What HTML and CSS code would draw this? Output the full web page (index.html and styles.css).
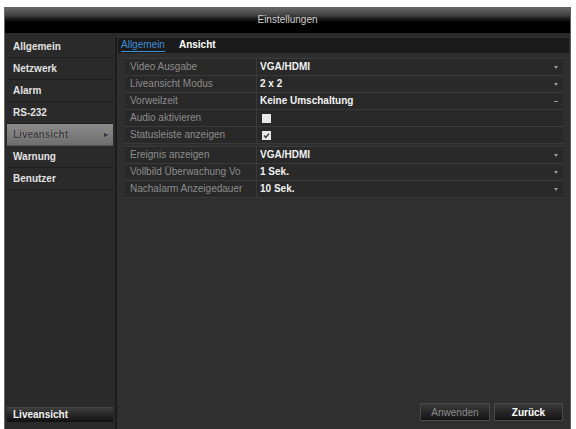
FILE: index.html
```html
<!DOCTYPE html>
<html lang="de">
<head>
<meta charset="utf-8">
<title>Einstellungen</title>
<link rel="stylesheet" href="styles.css">
</head>
<body>
<div class="frame">
  <div class="titlebar">Einstellungen</div>
  <div class="main">
    <nav class="sidebar">
      <div class="menu">
        <div class="item">Allgemein</div>
        <div class="item">Netzwerk</div>
        <div class="item">Alarm</div>
        <div class="item">RS-232</div>
        <div class="item selected">Liveansicht<span class="caret">&#9656;</span></div>
        <div class="item">Warnung</div>
        <div class="item">Benutzer</div>
      </div>
      <div class="sidefoot">Liveansicht</div>
    </nav>
    <section class="content">
      <div class="tabs">
        <span class="tab active">Allgemein</span>
        <span class="tab">Ansicht</span>
      </div>
      <div class="group">
        <div class="row"><div class="label">Video Ausgabe</div><div class="value">VGA/HDMI<span class="arrow"></span></div></div>
        <div class="row"><div class="label">Liveansicht Modus</div><div class="value">2 x 2<span class="arrow"></span></div></div>
        <div class="row"><div class="label">Vorweilzeit</div><div class="value">Keine Umschaltung<span class="arrow dash"></span></div></div>
        <div class="row"><div class="label">Audio aktivieren</div><div class="value"><span class="check"></span></div></div>
        <div class="row"><div class="label">Statusleiste anzeigen</div><div class="value"><span class="check on"><svg viewBox="0 0 9 9" width="9" height="9"><path d="M2 4.6 L3.8 6.4 L7 2.6" fill="none" stroke="#333" stroke-width="1.4"/></svg></span></div></div>
      </div>
      <div class="group">
        <div class="row"><div class="label">Ereignis anzeigen</div><div class="value">VGA/HDMI<span class="arrow"></span></div></div>
        <div class="row"><div class="label">Vollbild Überwachung Vo</div><div class="value">1 Sek.<span class="arrow"></span></div></div>
        <div class="row"><div class="label">Nachalarm Anzeigedauer</div><div class="value">10 Sek.<span class="arrow"></span></div></div>
      </div>
      <div class="buttons">
        <button class="btn disabled">Anwenden</button>
        <button class="btn">Zurück</button>
      </div>
    </section>
  </div>
</div>
</body>
</html>
```

FILE: styles.css
```css
html, body {
  margin: 0;
  padding: 0;
  background: #ffffff;
  overflow: hidden;
  height: 429px;
}
body {
  padding: 7px 5px 0 4px;
  box-sizing: border-box;
  font-family: "Liberation Sans", Arial, sans-serif;
  font-size: 10px;
}
.frame {
  height: 422px;
  background: #2a2a2a;
  border-left: 1px solid #6a6a6a;
  border-right: 1px solid #5a5a5a;
  display: flex;
  flex-direction: column;
}
.titlebar {
  height: 26px;
  line-height: 26px;
  text-align: center;
  color: #cfcfcf;
  font-size: 10px;
  background: linear-gradient(#6a6a6a 0, #444 30%, #111 50%, #000 60%, #000 100%);
}
.main {
  flex: 1;
  display: flex;
  padding-top: 3px;
  background: #2a2a2a;
}
.sidebar {
  width: 106px;
  padding: 0 2px;
  border-right: 2px solid #1c1c1c;
  display: flex;
  flex-direction: column;
  background: #2a2a2a;
}
.menu {
  display: flex;
  flex-direction: column;
}
.item {
  height: 21px;
  line-height: 21px;
  padding-left: 6px;
  border-bottom: 1px solid #1f1f1f;
  color: #e2e2e2;
  font-weight: bold;
  position: relative;
}
.item.selected {
  background: linear-gradient(#8c8c8c, #6e6e6e);
  color: #3a3a3a;
  text-shadow: 0 0 1px #bbb;
  border-bottom-color: #555;
}
.caret {
  position: absolute;
  right: 5px;
  top: 0;
  font-size: 8px;
  color: #333;
}
.sidefoot {
  margin-top: auto;
  margin-bottom: 7px;
  height: 14px;
  line-height: 14px;
  padding-left: 6px;
  color: #f0f0f0;
  font-weight: bold;
  background: linear-gradient(#3c3c3c, #101010);
  border-top: 1px solid #444;
}
.content {
  flex: 1;
  display: flex;
  flex-direction: column;
  background: #2f2f2f;
  padding: 2px 0 8px 1px;
}
.tabs {
  height: 15px;
  line-height: 14px;
  background: #1b1b1b;
  margin-right: 1px;
  padding-left: 3px;
  display: flex;
  gap: 14px;
}
.tab {
  color: #ffffff;
  font-weight: bold;
}
.tab.active {
  color: #3d8fd6;
  font-weight: normal;
  border-bottom: 1px solid #3d8fd6;
  height: 13px;
}
.group {
  margin: 5px 7px 0 7px;
  display: grid;
  grid-auto-rows: 16px;
  row-gap: 1px;
  padding: 1px 0;
  background: #3a3a3a;
}
.group + .group {
  margin-top: 2px;
}
.row {
  display: flex;
  background: #292929;
}
.label {
  width: 126px;
  padding-left: 5px;
  border-right: 1px solid #3a3a3a;
  color: #8c8c8c;
  line-height: 16px;
  white-space: nowrap;
  overflow: hidden;
}
.value {
  flex: 1;
  padding-left: 3px;
  color: #f2f2f2;
  font-weight: bold;
  line-height: 16px;
  display: flex;
  align-items: center;
  position: relative;
}
.arrow {
  position: absolute;
  right: 5px;
  top: 7px;
  width: 0;
  height: 0;
  border-left: 2px solid transparent;
  border-right: 2px solid transparent;
  border-top: 3px solid #9a9a9a;
}
.arrow.dash {
  border: none;
  width: 4px;
  height: 1px;
  background: #9a9a9a;
  top: 8px;
}
.check {
  width: 9px;
  height: 9px;
  margin-left: 2px;
  background: #e8e8e8;
  display: block;
}
.check svg {
  display: block;
}
.buttons {
  margin-top: auto;
  margin-right: 7px;
  display: flex;
  justify-content: flex-end;
  gap: 4px;
}
.btn {
  height: 18px;
  padding: 0;
  font-family: "Liberation Sans", Arial, sans-serif;
  font-size: 10px;
  font-weight: bold;
  color: #ffffff;
  border: 1px solid #4a4a4a;
  border-radius: 1px;
  background: linear-gradient(#3a3a3a, #141414);
  width: 69px;
}
.btn.disabled {
  width: 70px;
  color: #8a8a8a;
  font-weight: normal;
}
```
